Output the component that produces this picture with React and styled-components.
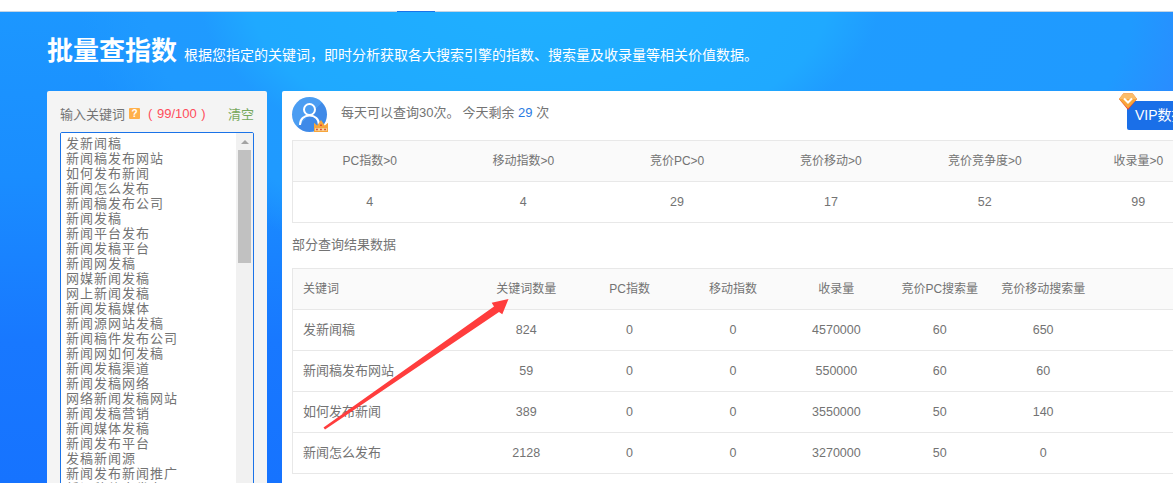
import React from "react"
import styled, {createGlobalStyle} from "styled-components"

const GlobalStyle = createGlobalStyle`
  html, body {
    margin: 0;
    height: 100%;
    overflow: hidden;
    background: #fff;
  }
  * {
    box-sizing: border-box;
  }
`

const FONT = `"Liberation Sans", "Noto Sans CJK SC", sans-serif`
const TEXT = "#737373"

const Page = styled.div`
  width: 1173px;
  height: 483px;
  overflow: hidden;
  position: relative;
  font-family: ${FONT};
  color: ${TEXT};
`

const TopBar = styled.div`
  height: 12px;
  background: #fff;
  border-bottom: 1px solid #c4d4e4;
  padding-left: 397px;
`

const ActiveTab = styled.div`
  width: 38px;
  height: 12px;
  border-bottom: 1px solid #1a73e8;
`

const Hero = styled.div`
  height: 471px;
  padding: 19px 0 0 47px;
  background:
    radial-gradient(ellipse 340px 175px at 540px -15px, #1fb0ff 0%, #1fa9ff 85%, rgba(31, 169, 255, 0) 100%),
    radial-gradient(ellipse 560px 300px at 640px -10px, #1f9dff 0%, #1f9aff 88%, rgba(31, 154, 255, 0) 100%),
    radial-gradient(ellipse 330px 240px at 960px 20px, #2a8cff 0%, #2a8cff 80%, rgba(42, 140, 255, 0) 100%),
    linear-gradient(180deg, #1c97ff 0%, #1a8dff 35%, #1878ff 70%, #1673ff 100%);
`

const TitleRow = styled.div`
  display: flex;
  align-items: baseline;
  height: 60px;
  color: #fff;
`

const Title = styled.h1`
  margin: 0;
  font-size: 26px;
  line-height: 40px;
  font-weight: 700;
`

const Subtitle = styled.span`
  margin-left: 7px;
  font-size: 14px;
`

const Columns = styled.div`
  display: flex;
  gap: 15px;
  align-items: flex-start;
`

const KeywordPanel = styled.div`
  width: 220px;
  height: 420px;
  flex: none;
  padding: 12px 13px 0;
  background: #f4f4f4;
  border-radius: 2px;
`

const KeywordHeader = styled.div`
  display: flex;
  align-items: center;
  height: 20px;
  margin-bottom: 9px;
  font-size: 13px;
`

const HelpBadge = styled.span`
  width: 11px;
  height: 11px;
  margin-left: 4px;
  background: #ffb04a;
  border-radius: 1px;
  color: #fff;
  font-size: 10px;
  font-weight: 700;
  line-height: 11px;
  text-align: center;
`

const Count = styled.span`
  margin-left: 8px;
  color: #ff4d5b;
  word-spacing: 1px;
`

const Clear = styled.span`
  margin-left: auto;
  color: #77a85c;
`

const KeywordBox = styled.div`
  display: flex;
  width: 194px;
  height: 400px;
  border: 1px solid #1a73e8;
  border-radius: 2px;
  background: #fff;
  overflow: hidden;
`

const KeywordInput = styled.textarea`
  flex: 1;
  min-width: 0;
  padding: 2px 0 0 5px;
  border: 0;
  outline: none;
  resize: none;
  background: #fff;
  color: ${TEXT};
  font-family: "Noto Sans CJK SC", sans-serif;
  font-size: 13px;
  line-height: 15px;
  letter-spacing: 1px;
  white-space: pre;
  overflow: hidden;
`

const ScrollTrack = styled.div`
  width: 17px;
  flex: none;
  padding: 0 2px;
  background: #f1f1f1;
`

const ScrollArrow = styled.div`
  display: flex;
  justify-content: center;
  align-items: center;
  height: 17px;
  &::before {
    content: "";
    border-left: 4px solid transparent;
    border-right: 4px solid transparent;
    border-bottom: 4px solid #a3a3a3;
  }
`

const ScrollThumb = styled.div`
  height: 113px;
  background: #c1c1c1;
`

const ResultPanel = styled.div`
  width: 960px;
  height: 420px;
  flex: none;
  padding: 0 0 0 10px;
  background: #fff;
  border-radius: 2px;
`

const QuotaRow = styled.div`
  display: flex;
  align-items: flex-start;
  height: 49px;
  padding-top: 6px;
`

const Avatar = styled.div`
  position: relative;
  width: 35px;
  height: 35px;
  margin-right: 14px;
  border-radius: 50%;
  background: linear-gradient(135deg, #4b9df2 50%, #3f8ae8 50%);
`

const Crown = styled.svg`
  position: absolute;
  right: -1px;
  bottom: 0;
`

const QuotaText = styled.span`
  font-size: 13px;
  line-height: 31px;
`

const Remain = styled.span`
  margin-left: 3px;
`

const RemainCount = styled.span`
  color: #2a7ae2;
`

const VipWrap = styled.div`
  position: absolute;
  left: 1127px;
  top: 101px;
`

const VipButton = styled.div`
  width: 90px;
  height: 29px;
  padding-left: 8px;
  background: #1a6fe8;
  border-radius: 2px;
  color: #fff;
  font-size: 14px;
  line-height: 29px;
  white-space: nowrap;
`

const Diamond = styled.svg`
  position: absolute;
  left: -8px;
  top: -8px;
`

const Table = styled.table`
  width: ${p => p.$width}px;
  table-layout: fixed;
  border-collapse: collapse;
  border: 1px solid #e8e8e8;
  color: ${TEXT};
`

const HeadCell = styled.th`
  height: 41px;
  padding: 0 0 4px;
  background: #fafafa;
  border-bottom: 1px solid #e8e8e8;
  font-size: 12px;
  font-weight: 400;
  text-align: ${p => (p.$left ? "left" : "center")};
  padding-left: ${p => (p.$left ? "10px" : "0")};
`

const Cell = styled.td`
  height: 41px;
  padding: 0;
  border-bottom: 1px solid #e8e8e8;
  font-size: 12.500px;
  text-align: center;
`

const KeywordCell = styled(Cell)`
  padding: 0 0 3px 10px;
  font-size: 13px;
  text-align: left;
`

const SectionTitle = styled.div`
  height: 45px;
  font-size: 13px;
  line-height: 44px;
`

const ArrowMark = styled.svg`
  position: absolute;
  left: 0;
  top: 0;
  pointer-events: none;
`

const firstKeywords = [
  "发新闻稿", "新闻稿发布网站", "如何发布新闻", "新闻怎么发布", "新闻稿发布公司",
  "新闻发稿", "新闻平台发布", "新闻发稿平台", "新闻网发稿", "网媒新闻发稿",
  "网上新闻发稿", "新闻发稿媒体", "新闻源网站发稿", "新闻稿件发布公司", "新闻网如何发稿",
  "新闻发稿渠道", "新闻发稿网络", "网络新闻发稿网站", "新闻发稿营销", "新闻媒体发稿",
  "新闻发布平台", "发稿新闻源", "新闻发布新闻推广", "新闻稿软文发布",
]

const summaryHead = ["PC指数>0", "移动指数>0", "竞价PC>0", "竞价移动>0", "竞价竞争度>0", "收录量>0"]
const summaryRow = [4, 4, 29, 17, 52, 99]

const resultHead = ["关键词数量", "PC指数", "移动指数", "收录量", "竞价PC搜索量", "竞价移动搜索量", ""]
const results = [
  ["发新闻稿", 824, 0, 0, 4570000, 60, 650, ""],
  ["新闻稿发布网站", 59, 0, 0, 550000, 60, 60, ""],
  ["如何发布新闻", 389, 0, 0, 3550000, 50, 140, ""],
  ["新闻怎么发布", 2128, 0, 0, 3270000, 50, 0, ""],
]

export default function App() {
  return (
    <Page>
      <GlobalStyle />
      <TopBar>
        <ActiveTab />
      </TopBar>
      <Hero>
        <TitleRow>
          <Title>批量查指数</Title>
          <Subtitle>根据您指定的关键词，即时分析获取各大搜索引擎的指数、搜索量及收录量等相关价值数据。</Subtitle>
        </TitleRow>
        <Columns>
          <KeywordPanel>
            <KeywordHeader>
              输入关键词
              <HelpBadge>?</HelpBadge>
              <Count>( 99/100 )</Count>
              <Clear>清空</Clear>
            </KeywordHeader>
            <KeywordBox>
              <KeywordInput readOnly spellCheck={false} defaultValue={firstKeywords.join("\n")} />
              <ScrollTrack>
                <ScrollArrow />
                <ScrollThumb />
              </ScrollTrack>
            </KeywordBox>
          </KeywordPanel>
          <ResultPanel>
            <QuotaRow>
              <Avatar>
                <svg width="35" height="35" viewBox="0 0 35 35" fill="none" stroke="#fff" strokeWidth="2">
                  <circle cx="17.500" cy="12.500" r="5.500" />
                  <path d="M8 28c0-6 4-9.500 9.500-9.500S27 22 27 28" />
                </svg>
                <Crown width="14" height="12" viewBox="0 0 13 11">
                  <path d="M0 2.500l3 2.500L6.500 0 10 5l3-2.500V11H0z" fill="#f7a63c" />
                  <path d="M1 7.500h11V10H1z" fill="#f8d9a0" />
                  <path d="M2 8h1.500v1.500H2zM5.700 8h1.500v1.500H5.700zM9.500 8H11v1.500H9.500zM5.800 4h1.400v1.500H5.800z" fill="#d9352b" />
                </Crown>
              </Avatar>
              <QuotaText>
                每天可以查询30次。
                <Remain>今天剩余 <RemainCount>29</RemainCount> 次</Remain>
              </QuotaText>
            </QuotaRow>
            <Table $width={924}>
              <thead>
                <tr>
                  {summaryHead.map(h => <HeadCell key={h}>{h}</HeadCell>)}
                </tr>
              </thead>
              <tbody>
                <tr>
                  {summaryRow.map((v, i) => <Cell key={i}>{v}</Cell>)}
                </tr>
              </tbody>
            </Table>
            <SectionTitle>部分查询结果数据</SectionTitle>
            <Table $width={906}>
              <colgroup>
                <col style={{width: 182}} />
                {resultHead.map((h, i) => <col key={i} style={{width: 103.4}} />)}
              </colgroup>
              <thead>
                <tr>
                  <HeadCell $left>关键词</HeadCell>
                  {resultHead.map((h, i) => <HeadCell key={i}>{h}</HeadCell>)}
                </tr>
              </thead>
              <tbody>
                {results.map(([keyword, ...values]) => (
                  <tr key={keyword}>
                    <KeywordCell>{keyword}</KeywordCell>
                    {values.map((v, i) => <Cell key={i}>{v}</Cell>)}
                  </tr>
                ))}
              </tbody>
            </Table>
          </ResultPanel>
        </Columns>
      </Hero>
      <VipWrap>
        <VipButton>VIP数据</VipButton>
        <Diamond width="18" height="17" viewBox="0 0 18 17">
          <path d="M4.500 0.500h9L18 6l-9 11L0 6z" fill="#e8452f" />
          <path d="M4.500 0.500h9L18 6l-9 9.500L0 6z" fill="#f9a63a" />
          <path d="M4.500 0.500h9L18 6H0z" fill="#fbbd6a" />
          <path d="M5 5.500l4 4 4-4" fill="none" stroke="#fff" strokeWidth="2" />
        </Diamond>
      </VipWrap>
      <ArrowMark width="1173" height="483" viewBox="0 0 1173 483">
        <path d="M323.500 427.500L494 306.500 491.700 302.700 508.500 299 502.300 314.300 499 312 325 429.500z" fill="#ff3d3d" />
      </ArrowMark>
    </Page>
  )
}
